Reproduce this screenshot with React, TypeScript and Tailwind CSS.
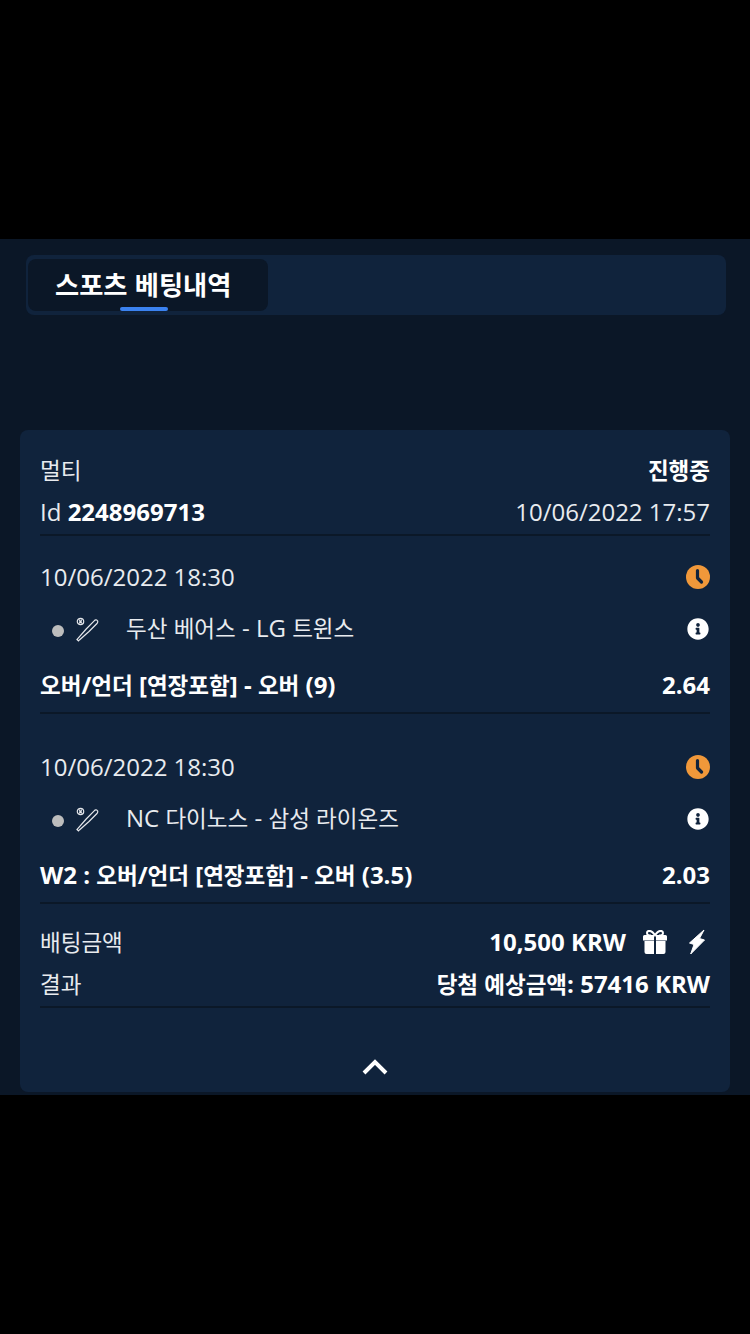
import { FaInfoCircle } from 'react-icons/fa';

const font = { fontFamily: '"Open Sans", "Noto Sans CJK KR", sans-serif' };

// hangul sits a little smaller than the latin text around it
function Ko({ text, className = 'text-[22.5px]' }: { text: string; className?: string }) {
  return (
    <>
      {text.split(/([가-힣]+)/).map((part, i) =>
        /[가-힣]/.test(part) ? <span key={i} className={className}>{part}</span> : part,
      )}
    </>
  );
}

function BatIcon() {
  return (
    <svg width="26" height="26" viewBox="0 0 26 26" fill="none" stroke="#e5e7eb" strokeWidth="1.200">
      <path d="M2 22.500l1.500 1.500 1.200-1.300 9.300-8.200 8-8c1-1 1-2.400.2-3.100-.8-.8-2-.6-3 .4l-8 8.200-8.200 9.300z" />
      <circle cx="5.500" cy="4.500" r="3.200" />
      <path d="M4.500 2.500c.6 1.300.6 2.700 0 4M6.500 2.500c-.6 1.300-.6 2.700 0 4" />
    </svg>
  );
}

function ClockIcon() {
  return (
    <svg width="24" height="24" viewBox="0 0 24 24">
      <circle cx="12" cy="12" r="12" fill="#f0983a" />
      <path d="M11.500 5.500v7.500l4 4" fill="none" stroke="#10233c" strokeWidth="3.200" strokeLinecap="round" strokeLinejoin="round" />
    </svg>
  );
}

function GiftIcon() {
  return (
    <svg width="24" height="24" viewBox="0 0 24 24" className="ml-[17px]">
      <path d="M8 5.500C5.500 5.500 4 4.400 4 3 4 1.500 5.100.9 6.300.9c2.400 0 4.300 2 5.700 4.400C13.400 2.900 15.300.9 17.700.9 18.900.9 20 1.500 20 3c0 1.400-1.500 2.500-4 2.500" fill="none" stroke="#fff" strokeWidth="2" />
      <path d="M1.500 5h9.500v5.500H0V6.500A1.500 1.500 0 0 1 1.500 5zM13 5h9.500A1.500 1.500 0 0 1 24 6.500v4H13z" fill="#fff" />
      <path d="M1.500 11h9.500v13H3.500a2 2 0 0 1-2-2zM13 11h9.500v11a2 2 0 0 1-2 2H13z" fill="#fff" />
    </svg>
  );
}

function BoltIcon() {
  return (
    <svg width="18" height="26" viewBox="0 0 18 26" className="ml-[21px] mr-[4px]">
      <path d="M16 1L1.500 14l4.500 1.500L2.700 25 16.500 11l-5-1.500z" fill="#fff" stroke="#fff" strokeWidth="1" strokeLinejoin="round" />
    </svg>
  );
}

function Selection(props: { date: string; match: string; market: string; odds: string }) {
  return (
    <div className="border-b-2 border-[#0b1828]">
      <div className="flex h-[38px] items-center justify-between">
        <span className="text-[24px] text-[#e8ebef]">{props.date}</span>
        <ClockIcon />
      </div>
      <div className="mt-[13px] flex h-[38px] items-center justify-between">
        <div className="flex items-center">
          <span className="ml-[12px] mt-[6px] h-[12px] w-[12px] rounded-full bg-[#bdbdbd]" />
          <span className="ml-[11px] mt-[4px] flex w-[28px]"><BatIcon /></span>
          <span className="ml-[23px] text-[24px] text-[#e8ebef]"><Ko text={props.match} /></span>
        </div>
        <FaInfoCircle className="mr-[1px] mt-[2px] h-[22px] w-[22px] text-white" />
      </div>
      <div className="mt-[19px] flex h-[38px] items-center justify-between pb-[1px] text-[24px] font-bold text-white">
        <span><Ko text={props.market} /></span>
        <span>{props.odds}</span>
      </div>
      <div className="h-[8px]" />
    </div>
  );
}

export default function App() {
  return (
    <div className="flex min-h-[1334px] flex-col bg-black" style={font}>
      <div className="mt-[239px] h-[856px] bg-[#0b1727] px-[20px]">
        {/* tab bar */}
        <div className="ml-[6px] mr-[4px] mt-[16px] h-[60px] rounded-[8px] bg-[#10233c] p-[4px] pl-[2px]">
          <div className="relative flex h-[52px] w-[240px] items-center rounded-[8px] bg-[#0b1727] pb-[2px] pl-[27px]">
            <span className="text-[28px] font-bold leading-none text-white"><Ko text="스포츠 베팅내역" className="text-[26.250px]" /></span>
            <span className="absolute bottom-[0px] left-[92px] h-[4px] w-[48px] rounded-full bg-[#3b82f0]" />
          </div>
        </div>

        {/* bet card */}
        <div className="mt-[115px] h-[662px] rounded-[8px] bg-[#10233c] px-[20px] pt-[19px]">
          <div className="flex h-[42px] items-center justify-between text-[24px] text-[#e8ebef]">
            <span><Ko text="멀티" /></span>
            <span className="font-bold text-white"><Ko text="진행중" /></span>
          </div>
          <div className="flex h-[45px] items-center justify-between border-b-2 border-[#0b1828] pb-[2px] text-[24px] text-[#e8ebef]">
            <span>Id <b className="font-bold text-white">2248969713</b></span>
            <span>10/06/2022 17:57</span>
          </div>
          <div className="pt-[22px]">
            <Selection date="10/06/2022 18:30" match="두산 베어스 - LG 트윈스" market="오버/언더 [연장포함] - 오버 (9)" odds="2.64" />
          </div>
          <div className="pt-[34px]">
            <Selection date="10/06/2022 18:30" match="NC 다이노스 - 삼성 라이온즈" market="W2 : 오버/언더 [연장포함] - 오버 (3.5)" odds="2.03" />
          </div>
          <div className="mt-[17px] flex h-[42px] items-center justify-between text-[24px] text-[#e8ebef]">
            <span><Ko text="배팅금액" /></span>
            <div className="flex items-center text-[24px] font-bold text-white">
              <span>10,500 KRW</span>
              <GiftIcon />
              <BoltIcon />
            </div>
          </div>
          <div className="flex h-[45px] items-center justify-between border-b-2 border-[#0b1828] pb-[2px] text-[24px] text-[#e8ebef]">
            <span><Ko text="결과" /></span>
            <span className="font-bold text-white"><Ko text="당첨 예상금액: 57416 KRW" /></span>
          </div>
          <div className="flex justify-center pt-[51px]">
            <svg width="26" height="16" viewBox="0 0 26 16" fill="none" stroke="#fff" strokeWidth="4">
              <path d="M2 14L13 3l11 11" />
            </svg>
          </div>
        </div>
      </div>
    </div>
  );
}
